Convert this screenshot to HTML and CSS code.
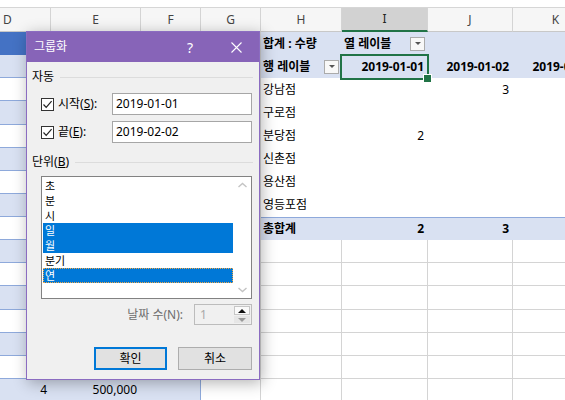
FILE: index.html
```html
<!DOCTYPE html>
<html lang="ko">
<head>
<meta charset="utf-8">
<title>그룹화</title>
<link rel="stylesheet" href="styles.css">
</head>
<body>
<div class="topbar"></div>
<div class="sheet">
  <div class="colhdr">
    <div class="hc">D</div><div class="hc">E</div><div class="hc">F</div><div class="hc">G</div>
    <div class="hc">H</div><div class="hc sel">I</div><div class="hc">J</div><div class="hc">K</div>
  </div>
  <div class="row">
    <div class="c th"></div><div class="c th"></div><div class="c th te"></div><div class="c g"></div>
    <div class="c ph">합계 : 수량</div><div class="c ph">열 레이블<span class="dd"></span></div><div class="c ph"></div><div class="c ph"></div>
  </div>
  <div class="row">
    <div class="c tb"></div><div class="c tb"></div><div class="c tb te"></div><div class="c g"></div>
    <div class="c ph">행 레이블<span class="dd"></span></div><div class="c ph r selcell">2019-01-01</div><div class="c ph r">2019-01-02</div><div class="c ph r">2019-01-03</div>
  </div>
  <div class="row">
    <div class="c tw"></div><div class="c tw"></div><div class="c tw te"></div><div class="c g"></div>
    <div class="c">강남점</div><div class="c"></div><div class="c r">3</div><div class="c"></div>
  </div>
  <div class="row">
    <div class="c tb"></div><div class="c tb"></div><div class="c tb te"></div><div class="c g"></div>
    <div class="c">구로점</div><div class="c"></div><div class="c"></div><div class="c"></div>
  </div>
  <div class="row">
    <div class="c tw"></div><div class="c tw"></div><div class="c tw te"></div><div class="c g"></div>
    <div class="c">분당점</div><div class="c r">2</div><div class="c"></div><div class="c"></div>
  </div>
  <div class="row">
    <div class="c tb"></div><div class="c tb"></div><div class="c tb te"></div><div class="c g"></div>
    <div class="c">신촌점</div><div class="c"></div><div class="c"></div><div class="c"></div>
  </div>
  <div class="row">
    <div class="c tw"></div><div class="c tw"></div><div class="c tw te"></div><div class="c g"></div>
    <div class="c">용산점</div><div class="c"></div><div class="c"></div><div class="c"></div>
  </div>
  <div class="row">
    <div class="c tb"></div><div class="c tb"></div><div class="c tb te"></div><div class="c g"></div>
    <div class="c">영등포점</div><div class="c"></div><div class="c"></div><div class="c"></div>
  </div>
  <div class="row">
    <div class="c tw"></div><div class="c tw"></div><div class="c tw te"></div><div class="c g"></div>
    <div class="c pt">총합계</div><div class="c pt r">2</div><div class="c pt r">3</div><div class="c pt"></div>
  </div>
  <div class="row">
    <div class="c tb"></div><div class="c tb"></div><div class="c tb te"></div><div class="c g"></div>
    <div class="c g"></div><div class="c g"></div><div class="c g"></div><div class="c g"></div>
  </div>
  <div class="row">
    <div class="c tw"></div><div class="c tw"></div><div class="c tw te"></div><div class="c g"></div>
    <div class="c g"></div><div class="c g"></div><div class="c g"></div><div class="c g"></div>
  </div>
  <div class="row">
    <div class="c tb"></div><div class="c tb"></div><div class="c tb te"></div><div class="c g"></div>
    <div class="c g"></div><div class="c g"></div><div class="c g"></div><div class="c g"></div>
  </div>
  <div class="row">
    <div class="c tw"></div><div class="c tw"></div><div class="c tw te"></div><div class="c g"></div>
    <div class="c g"></div><div class="c g"></div><div class="c g"></div><div class="c g"></div>
  </div>
  <div class="row">
    <div class="c tb"></div><div class="c tb"></div><div class="c tb te"></div><div class="c g"></div>
    <div class="c g"></div><div class="c g"></div><div class="c g"></div><div class="c g"></div>
  </div>
  <div class="row">
    <div class="c tw"></div><div class="c tw"></div><div class="c tw te"></div><div class="c g"></div>
    <div class="c g"></div><div class="c g"></div><div class="c g"></div><div class="c g"></div>
  </div>
  <div class="row">
    <div class="c tb r">4</div><div class="c tb r">500,000</div><div class="c tb te"></div><div class="c g"></div>
    <div class="c g"></div><div class="c g"></div><div class="c g"></div><div class="c g"></div>
  </div>
</div>

<div class="dialog">
  <div class="titlebar">
    <span class="title">그룹화</span>
    <span class="tbtn help">?</span>
    <span class="tbtn"><svg width="11" height="11" viewBox="0 0 11 11"><path d="M0.5 0.5L10.5 10.5M10.5 0.5L0.5 10.5" stroke="#fff" stroke-width="1.1" fill="none"/></svg></span>
  </div>
  <div class="dbody">
    <div class="grp"><span>자동</span><i class="rule"></i></div>
    <div class="frow first">
      <span class="chk"><span class="box"><svg width="11" height="11" viewBox="0 0 11 11"><path d="M1.5 5.5L4.2 8.3L9.6 2.2" stroke="#222" stroke-width="1.2" fill="none"/></svg></span>시작(<u>S</u>):</span>
      <div class="input">2019-01-01</div>
    </div>
    <div class="frow">
      <span class="chk"><span class="box"><svg width="11" height="11" viewBox="0 0 11 11"><path d="M1.5 5.5L4.2 8.3L9.6 2.2" stroke="#222" stroke-width="1.2" fill="none"/></svg></span>끝(<u>E</u>):</span>
      <div class="input">2019-02-02</div>
    </div>
    <div class="grp g2"><span>단위(<u>B</u>)</span><i class="rule"></i></div>
    <div class="list">
      <div class="items">
        <div class="it">초</div>
        <div class="it">분</div>
        <div class="it">시</div>
        <div class="it on">일</div>
        <div class="it on">월</div>
        <div class="it">분기</div>
        <div class="it on focus">연</div>
      </div>
      <div class="vs">
        <svg width="17" height="17" viewBox="0 0 17 17"><path d="M4.5 10L8.5 6.5L12.5 10" stroke="#c4c4c4" stroke-width="1.4" fill="none"/></svg>
        <svg width="17" height="17" viewBox="0 0 17 17"><path d="M4.5 7L8.5 10.5L12.5 7" stroke="#c4c4c4" stroke-width="1.4" fill="none"/></svg>
      </div>
    </div>
    <div class="spinrow">
      <span class="dis">날짜 수(N):</span>
      <div class="spin">
        <span class="val">1</span>
        <div class="sbtns"><span class="up"></span><span class="dn"></span></div>
      </div>
    </div>
    <div class="btnrow">
      <button class="btn def">확인</button>
      <button class="btn">취소</button>
    </div>
  </div>
</div>
</body>
</html>
```
FILE: styles.css
```css
* { box-sizing: border-box; }
html, body { margin: 0; padding: 0; }
body {
  width: 565px;
  height: 400px;
  overflow: hidden;
  position: relative;
  background: #fff;
  font-family: "Noto Sans", "Noto Sans CJK KR", sans-serif;
  font-size: 12px;
  color: #000;
}
.topbar { height: 8px; border-bottom: 1px solid #d6d6d6; }
.sheet { margin-left: -35px; width: 634px; }
.colhdr, .row {
  display: grid;
  grid-template-columns: 86px 90px 60px 60px 81px 86px 85px 86px;
}
.colhdr { height: 24px; }
.row { height: 23.125px; }
.hc {
  background: #f6f6f6;
  border-right: 1px solid #d4d4d4;
  border-bottom: 1px solid #c8c8c8;
  color: #444;
  display: flex;
  align-items: center;
  justify-content: center;
  line-height: 16px;
}
.hc.sel { background: #d2d2d2; border-bottom: 2px solid #217346; color: #222; }

.c {
  display: flex;
  align-items: center;
  padding: 0 3px 0 2px;
  white-space: nowrap;
  overflow: hidden;
  line-height: 16px;
}
.r { justify-content: flex-end; padding-right: 4px; }
.th { background: #4472c4; }
.tb { background: #d9e1f2; border-bottom: 1px solid #8ea9db; }
.tw { background: #fff; border-bottom: 1px solid #8ea9db; }
.te { border-right: 1px solid #8ea9db; }
.g { border-right: 1px solid #d4d4d4; border-bottom: 1px solid #d4d4d4; }
.ph { background: #d9e1f2; font-weight: bold; }
.pt { background: #d9e1f2; border-top: 1px solid #8ea9db; font-weight: bold; }

.dd {
  margin-left: auto;
  width: 15px;
  height: 14px;
  border: 1px solid #ababab;
  background: #f8f8f8;
  display: flex;
  align-items: center;
  justify-content: center;
}
.dd::before {
  content: "";
  border-left: 3px solid transparent;
  border-right: 3px solid transparent;
  border-top: 3px solid #555;
}
.selcell { position: relative; overflow: visible; }
.selcell::before {
  content: "";
  position: absolute;
  left: -2px; top: -1px; right: -1px; bottom: -2px;
  border: 2px solid #217346;
  z-index: 1;
}
.selcell::after {
  content: "";
  position: absolute;
  right: -4px; bottom: -5px;
  width: 7px; height: 7px;
  background: #217346;
  border: 1px solid #fff;
  z-index: 2;
}

.dialog {
  position: absolute;
  left: 26px; top: 31px;
  width: 234px; height: 349px;
  border: 1px solid #8b6cc1;
  background: #f0f0f0;
  box-shadow: 2px 3px 14px rgba(0,0,0,0.3);
  display: flex;
  flex-direction: column;
  z-index: 5;
}
.titlebar {
  height: 30px;
  background: #8764b8;
  color: #fff;
  display: flex;
  align-items: center;
}
.title { flex: 1; padding-left: 7px; line-height: 16px; }
.tbtn {
  width: 46px; height: 30px;
  display: flex; align-items: center; justify-content: center;
}
.help { font-size: 14px; }
.dbody {
  flex: 1;
  padding: 0 7px 0 5px;
  display: flex;
  flex-direction: column;
}
.grp { display: flex; align-items: center; height: 16px; line-height: 16px; margin-top: 7px; }
.grp .rule { flex: 1; height: 1px; background: #dcdcdc; margin-left: 6px; margin-right: -1px; }
.g2 { margin-top: 11px; }
.frow { display: flex; align-items: center; height: 22px; margin-top: 6px; margin-left: 9px; }
.frow.first { margin-top: 8px; }
.chk { width: 71px; display: flex; align-items: center; line-height: 16px; }
.box {
  width: 13px; height: 13px;
  border: 1px solid #333;
  background: #fff;
  margin-right: 4px;
  display: flex;
}
.input {
  flex: 1;
  height: 22px;
  border: 1px solid #a6a6a6;
  background: #fff;
  padding-left: 3px;
  display: flex;
  align-items: center;
  line-height: 16px;
}
.list {
  margin-top: 6px;
  margin-left: 9px;
  height: 123px;
  border: 1px solid #828282;
  background: #fff;
  display: flex;
}
.items { flex: 1; padding: 1px; }
.it { height: 15px; line-height: 15px; padding-left: 2px; font-size: 11px; overflow: hidden; }
.it.on { background: #0078d7; color: #fff; }
.it.focus { outline: 1px dotted #f0a848; outline-offset: -1px; }
.vs { width: 17px; display: flex; flex-direction: column; justify-content: space-between; }
.vs svg { display: block; }
.spinrow { margin-top: 5px; height: 21px; display: flex; align-items: center; justify-content: flex-end; }
.dis { color: #6d6d6d; margin-right: 11px; line-height: 16px; }
.spin { width: 58px; height: 21px; border: 1px solid #bcbcbc; display: flex; }
.val { flex: 1; color: #a8a8a8; padding-left: 5px; display: flex; align-items: center; }
.sbtns { width: 17px; padding: 1px 1px 1px 0; display: flex; flex-direction: column; gap: 1px; }
.up, .dn { flex: 1; display: flex; align-items: center; justify-content: center; }
.up { border: 1px solid #c6c6c6; background: #fafafa; }
.dn { background: #e6e6e6; }
.up::before {
  content: "";
  border-left: 4px solid transparent;
  border-right: 4px solid transparent;
  border-bottom: 4px solid #111;
}
.dn::before {
  content: "";
  border-left: 4px solid transparent;
  border-right: 4px solid transparent;
  border-top: 4px solid #9a9a9a;
}
.btnrow { margin-top: 22px; display: flex; justify-content: flex-end; gap: 11px; }
.btn {
  width: 74px; height: 23px;
  padding: 0;
  font: inherit;
  color: #000;
  background: #e1e1e1;
  border: 1px solid #adadad;
  line-height: 16px;
}
.btn.def { width: 73px; border: 2px solid #0078d7; }
```
